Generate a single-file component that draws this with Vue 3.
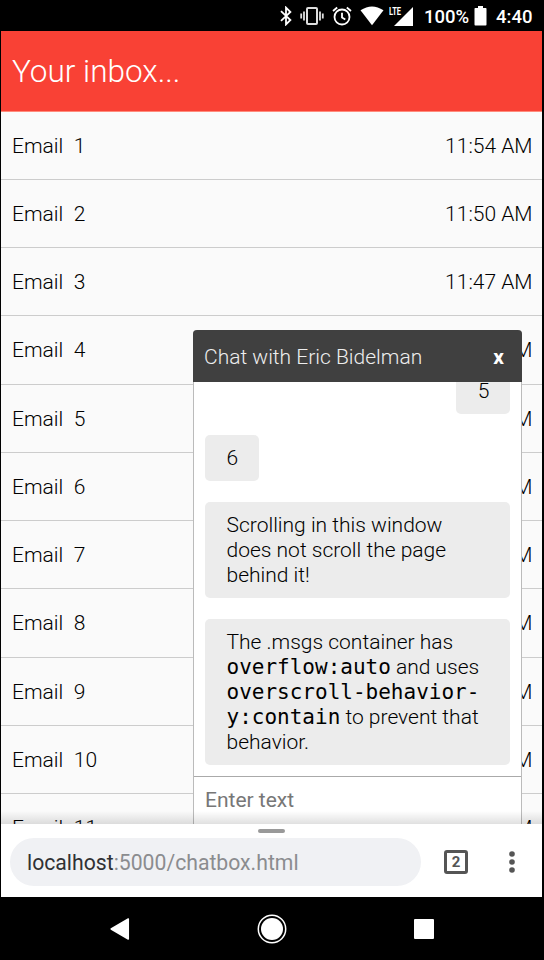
<script setup>
const times = ['11:54 AM', '11:50 AM', '11:47 AM', '11:44 AM', '11:40 AM', '11:37 AM', '11:33 AM', '11:30 AM', '11:26 AM', '11:22 AM', '11:19 AM']
const emails = times.map((time, i) => ({ id: i + 1, time }))
</script>

<template>
  <div class="phone">
    <div class="status">
      <svg class="bt" width="14" height="20" viewBox="0 0 14 20"><path d="M2 5.2 11.4 14 7 18.4V1.6L11.4 6 2 14.8" fill="none" stroke="#fff" stroke-width="1.8" /></svg>
      <svg class="vib" width="24" height="20" viewBox="0 0 24 20"><rect x="7" y="2" width="10" height="16" rx="1" fill="none" stroke="#ddd" stroke-width="2" /><path d="M4 5.5v9M1.2 7.5v5M20 5.5v9M22.8 7.5v5" stroke="#ddd" stroke-width="1.8" /></svg>
      <svg class="alarm" width="20" height="20" viewBox="0 0 20 20" fill="none" stroke="#fff"><circle cx="10" cy="11" r="7.5" stroke-width="1.8" /><path d="M10 6.7v4.8l3.3 2M1 5 5.2 1.5M19 5 14.8 1.5" stroke-width="1.8" /></svg>
      <svg class="wifi" width="24" height="20" viewBox="0 0 24 20"><path d="M12 19.2.5 4.3Q12-3.3 23.5 4.3Z" fill="#fff" /></svg>
      <div class="signal">
        <span>LTE</span>
        <svg width="19" height="19" viewBox="0 0 19 19"><path d="M0 19 19 0v19Z" fill="#fff" /></svg>
      </div>
      <span class="percent">100%</span>
      <svg class="battery" width="13" height="20" viewBox="0 0 13 20"><path d="M4 0h5v2h2.7q.8 0 .8.8v15.8q0 .9-.8.9H1.3q-.8 0-.8-.9V2.8q0-.8.8-.8H4Z" fill="#fff" /></svg>
      <span class="clock">4:40</span>
    </div>

    <main class="page">
      <h1>Your inbox...</h1>
      <div class="emails">
        <div v-for="mail in emails" :key="mail.id" class="email">
          <span class="subject"><span>Email</span><span>{{ mail.id }}</span></span>
          <span>{{ mail.time }}</span>
        </div>
      </div>

      <section class="chat">
        <header><span>Chat with Eric Bidelman</span><b>x</b></header>
        <div class="msgs">
          <div class="msg self">5</div>
          <div class="msg">6</div>
          <div class="msg">Scrolling in this window does not scroll the page behind it!</div>
          <div class="msg">The .msgs container has <code>overflow:auto</code> and uses <code>overscroll-behavior-y:contain</code> to prevent that behavior.</div>
        </div>
        <input type="text" placeholder="Enter text">
      </section>
      <div class="shade"></div>
    </main>

    <div class="toolbar">
      <i class="handle"></i>
      <div class="tools">
        <div class="url"><span>localhost</span>:5000/chatbox.html</div>
        <div class="tabs">2</div>
        <svg class="more" width="8" height="24" viewBox="0 0 8 24" fill="#555"><circle cx="4" cy="4" r="2.8" /><circle cx="4" cy="12" r="2.8" /><circle cx="4" cy="20" r="2.8" /></svg>
      </div>
    </div>

    <nav>
      <svg width="20" height="22" viewBox="0 0 20 22"><path d="M18.3 1v20L1.2 11Z" fill="#fff" stroke="#fff" stroke-width="1.5" stroke-linejoin="round" /></svg>
      <svg width="30" height="30" viewBox="0 0 30 30"><circle cx="15" cy="15" r="13.7" fill="none" stroke="#fff" stroke-width="1.5" /><circle cx="15" cy="15" r="11" fill="#fff" /></svg>
      <svg width="20" height="20" viewBox="0 0 20 20"><rect width="20" height="20" rx="1" fill="#fff" /></svg>
    </nav>
  </div>
</template>

<style>
body { background: #000; overflow: hidden; }
</style>

<style scoped>
* { box-sizing: border-box; }
.phone {
  width: 544px;
  height: 960px;
  background: #000;
  padding: 0 2px 0 1px;
  overflow: hidden;
  display: flex;
  flex-direction: column;
  font-family: Roboto, "Liberation Sans", sans-serif;
  font-size: 21px;
  font-weight: 300;
  color: #000;
}
.status {
  height: 31px;
  flex: none;
  padding: 1px 9.5px 0 0;
  display: flex;
  align-items: center;
  justify-content: flex-end;
  color: #fff;
  font-size: 18.5px;
  font-weight: 500;
}
.percent, .clock { padding-top: 1px; }
.vib { margin-left: 7px; }
.alarm { margin-left: 8px; }
.wifi { margin-left: 8px; }
.signal {
  display: flex;
  align-items: flex-end;
  margin-left: 5px;
}
.signal span {
  align-self: flex-start;
  width: 5px;
  font: 700 11px/10px Roboto, sans-serif;
  transform: scaleX(.68);
  transform-origin: left;
}
.percent { margin-left: 11px; }
.battery { margin-left: 5px; }
.clock { margin-left: 9px; }
.page {
  position: relative;
  height: 793px;
  flex: none;
  overflow: hidden;
  background: #fafafa;
}
h1 {
  margin: 0;
  height: 80.5px;
  padding: 1px 11px 0;
  display: flex;
  align-items: center;
  background: #f94135;
  border-bottom: 1px solid #ff8b7c;
  color: #fff;
  font-size: 31.5px;
  font-weight: 300;
}
.email {
  height: 68.25px;
  padding: 1px 9.5px 0 11px;
  display: flex;
  align-items: center;
  justify-content: space-between;
  border-bottom: 1px solid #ccc;
}
.subject { display: flex; gap: 10.5px; }
.chat {
  position: absolute;
  left: 192px;
  top: 299px;
  width: 329px;
  height: 510px;
  display: flex;
  flex-direction: column;
  background: #fff;
  border: 1px solid #bbb;
  border-top: 0;
  border-radius: 4px 4px 0 0;
}
.chat header {
  height: 52px;
  flex: none;
  margin: 0 -1px;
  padding: 1px 18px 0 11px;
  display: flex;
  align-items: center;
  justify-content: space-between;
  background: #404040;
  color: #eee;
  border-radius: 4px 4px 0 0;
}
.chat b { font-weight: 700; color: #fff; }
.msgs {
  height: 394px;
  flex: none;
  overflow: hidden;
  padding: 0 11px 11px;
  display: flex;
  flex-direction: column;
  justify-content: flex-end;
  align-items: flex-start;
  gap: 21px;
}
.msg {
  flex: none;
  max-width: 305px;
  padding: 11px 20.5px 10px 21.5px;
  line-height: 25px;
  background: #ececec;
  border-radius: 5px;
}
.self { align-self: flex-end; }
code { font: 400 21px/20px "DejaVu Sans Mono", monospace; }
input {
  height: 64px;
  padding: 0 11px 16px;
  border: 0;
  border-top: 1px solid #aaa;
  background: transparent;
  font: 400 21px Roboto, sans-serif;
}
input::placeholder { color: #777; }
.shade {
  position: absolute;
  left: 0;
  right: 0;
  bottom: 0;
  height: 13px;
  background: linear-gradient(transparent, rgba(0, 0, 0, .12));
}
.toolbar {
  height: 73px;
  flex: none;
  background: #fff;
}
.handle {
  display: block;
  width: 27px;
  height: 4px;
  margin: 0 auto;
  border-radius: 2px;
  background: #999;
  transform: translateY(5px);
}
.tools {
  display: flex;
  align-items: center;
  padding: 10px 0 0 9px;
}
.url {
  width: 411px;
  height: 48px;
  padding-left: 17px;
  border-radius: 24px;
  background: #f0f1f4;
  font-size: 21.2px;
  line-height: 50px;
  font-weight: 400;
  color: #8b8c8f;
}
.url span { color: #303134; }
.tabs {
  width: 24px;
  height: 24px;
  margin-left: 23px;
  border: 3px solid #555;
  border-radius: 3px;
  text-align: center;
  font-size: 15px;
  font-weight: 700;
  line-height: 19px;
  color: #555;
}
.more { margin-left: 40px; }
nav {
  flex: 1;
  display: flex;
  align-items: center;
  padding-left: 109px;
  gap: 127px;
}
</style>
